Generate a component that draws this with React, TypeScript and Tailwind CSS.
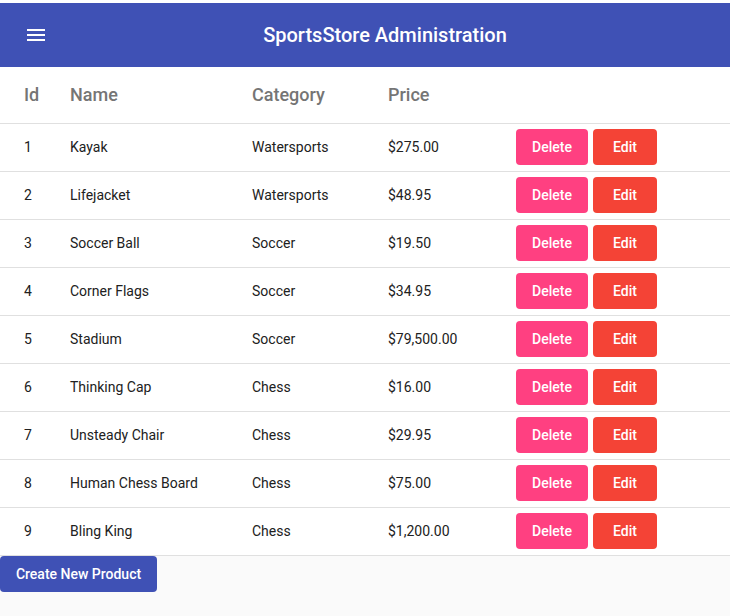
const products = [
  { id: 1, name: 'Kayak', category: 'Watersports', price: '$275.00' },
  { id: 2, name: 'Lifejacket', category: 'Watersports', price: '$48.95' },
  { id: 3, name: 'Soccer Ball', category: 'Soccer', price: '$19.50' },
  { id: 4, name: 'Corner Flags', category: 'Soccer', price: '$34.95' },
  { id: 5, name: 'Stadium', category: 'Soccer', price: '$79,500.00' },
  { id: 6, name: 'Thinking Cap', category: 'Chess', price: '$16.00' },
  { id: 7, name: 'Unsteady Chair', category: 'Chess', price: '$29.95' },
  { id: 8, name: 'Human Chess Board', category: 'Chess', price: '$75.00' },
  { id: 9, name: 'Bling King', category: 'Chess', price: '$1,200.00' },
]

export default function App() {
  return (
    <div className="min-h-[616px] bg-white pt-[3px]" style={{ fontFamily: 'Roboto, "Liberation Sans", sans-serif' }}>
      <div className="w-[730px] min-h-[613px] flex flex-col bg-[#fafafa]">
        <header className="h-16 bg-[#3f51b5] flex items-center text-white">
          <div className="pl-6 w-12 flex items-center">
            <svg width="24" height="24" viewBox="0 0 24 24" fill="white">
              <path d="M3 18h18v-2H3v2zm0-5h18v-2H3v2zm0-7v2h18V6H3z" />
            </svg>
          </div>
          <h1 className="flex-1 text-center text-[20px] font-medium pr-2">SportsStore Administration</h1>
        </header>

        <table className="w-full bg-white border-collapse text-left">
          <thead>
            <tr className="h-14 border-b border-[#e0e0e0] text-[18px] font-medium text-[#757575]">
              <th className="pl-6 w-[70px] font-medium">Id</th>
              <th className="w-[182px] font-medium">Name</th>
              <th className="w-[136px] font-medium">Category</th>
              <th className="w-[128px] font-medium">Price</th>
              <th></th>
            </tr>
          </thead>
          <tbody className="text-sm text-[#212121]">
            {products.map(p => (
              <tr key={p.id} className="h-12 border-b border-[#e0e0e0]">
                <td className="pl-6">{p.id}</td>
                <td>{p.name}</td>
                <td>{p.category}</td>
                <td>{p.price}</td>
                <td>
                  <div className="flex gap-[5px]">
                    <button className="w-[72px] h-9 rounded bg-[#ff4081] text-white text-sm font-medium">Delete</button>
                    <button className="w-16 h-9 rounded bg-[#f44336] text-white text-sm font-medium">Edit</button>
                  </div>
                </td>
              </tr>
            ))}
          </tbody>
        </table>

        <div>
          <button className="w-[157px] h-9 rounded bg-[#3f51b5] text-white text-sm font-medium">Create New Product</button>
        </div>
      </div>
    </div>
  )
}
